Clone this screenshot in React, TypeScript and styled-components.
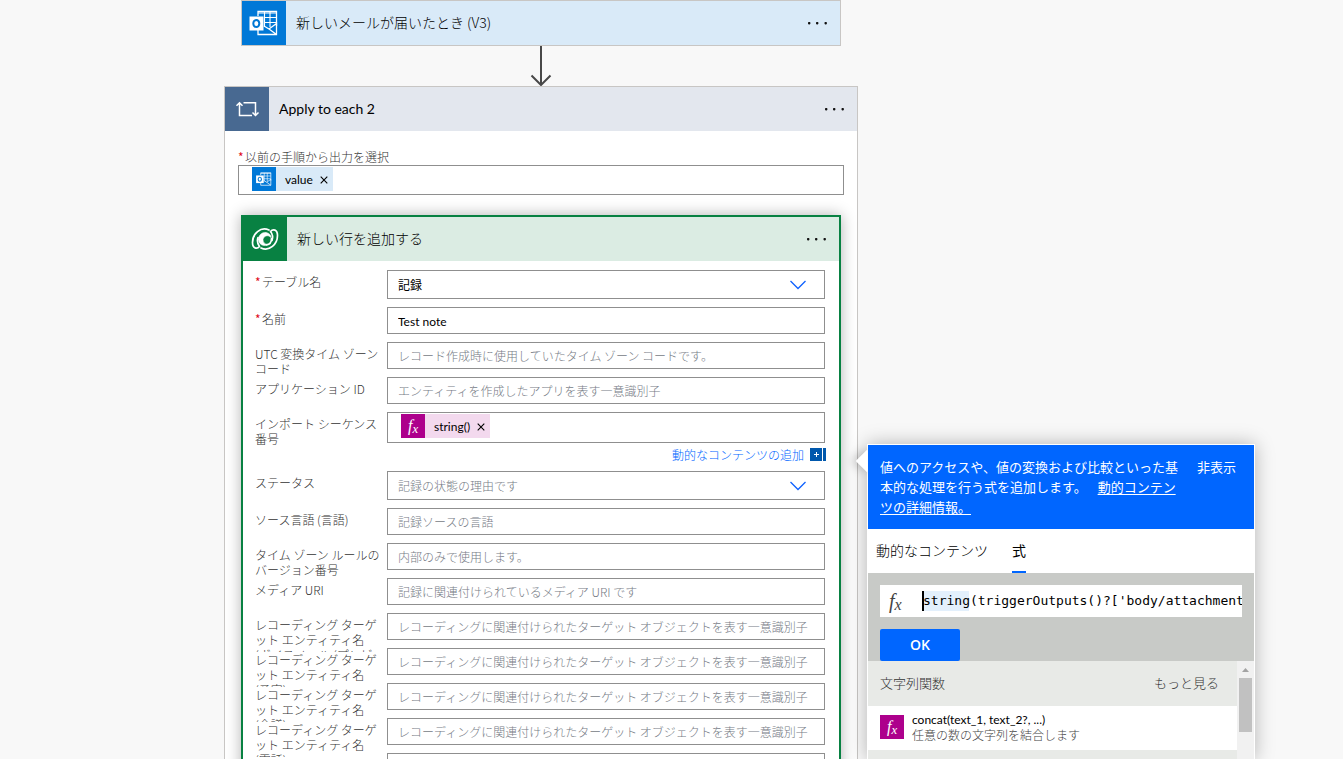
import React, { useState } from "react";
import styled, { createGlobalStyle } from "styled-components";

const GlobalStyle = createGlobalStyle`
  *, *::before, *::after { box-sizing: border-box; }
  body {
    margin: 0;
    background: #f8f8f8;
    color: #000;
    font: 300 12px/15px "Noto Sans CJK JP", sans-serif;
  }
  button, input, select { font: inherit; color: inherit; margin: 0; padding: 0; border: 0; background: none; border-radius: 0; }
  button { cursor: pointer; }
`;

const latinFont = 'Lato, "Noto Sans CJK JP", sans-serif';

const Page = styled.main`
  height: 100vh;
  overflow: hidden;
  padding-left: 224px;
`;

const Flow = styled.div`
  display: flex;
  flex-direction: column;
  width: 100%;
  max-width: 634px;
`;

const TriggerCard = styled.section`
  margin: 0 17px;
  border: 1px solid #c8c6c4;
`;

const Connector = styled.svg`
  display: block;
  align-self: center;
  width: 22px;
  height: 40px;
`;

const LoopCard = styled.section`
  background: #fff;
  border: 1px solid #c8c6c4;
`;

const LoopBody = styled.div`
  padding: 18px 13px 24px;
`;

const ActionCard = styled.section`
  margin: 20px 3px 0;
  background: #fff;
  border: 2px solid #088142;
  box-shadow: 0 0 14px rgba(0, 0, 0, 0.3);
`;

const Header = styled.header<{ $bg: string }>`
  display: flex;
  align-items: center;
  height: 44px;
  background: ${(p) => p.$bg};
`;

const IconTile = styled.span<{ $bg: string; $size: number }>`
  display: flex;
  align-items: center;
  justify-content: center;
  flex: none;
  width: ${(p) => p.$size}px;
  height: ${(p) => p.$size}px;
  background: ${(p) => p.$bg};
  svg { display: block; width: 100%; height: 100%; }
`;

const Title = styled.h2<{ $latin?: boolean }>`
  flex: 1;
  margin: 0 0 0 10px;
  font-size: 14px;
  line-height: 20px;
  ${(p) => (p.$latin ? `font-family: ${latinFont}; font-weight: 400;` : "font-weight: 300; padding-bottom: 2px;")}
`;

const MoreButton = styled.button`
  display: flex;
  align-items: center;
  justify-content: center;
  width: 44px;
  height: 44px;
`;

const FieldLabel = styled.label`
  display: block;
  color: #333;
  white-space: pre-line;
`;

const SourceLabel = styled(FieldLabel)`
  margin-bottom: 1px;
`;

const Star = styled.span`
  display: inline-block;
  width: 7px;
  color: #e00b1c;
  font-weight: 400;
`;

const Rows = styled.div`
  display: flex;
  flex-direction: column;
  gap: 8px;
  padding: 9px 14px 16px 12px;
`;

const Row = styled.div`
  display: grid;
  grid-template-columns: 128px minmax(0, 1fr);
  column-gap: 4px;
  align-items: start;
`;

const RowLabel = styled(FieldLabel)`
  height: 35px;
  margin: 4px 0 -16px;
  overflow: hidden;
`;

const TextInput = styled.input`
  display: block;
  width: 100%;
  height: 27px;
  padding: 2px 10px 0;
  border: 1px solid #8f8f8f;
  background: #fff;
  font-family: ${latinFont};
  font-weight: 400;
  &::placeholder { color: #767b85; opacity: 1; font-family: "Noto Sans CJK JP", sans-serif; font-weight: 300; }
`;

const SelectBox = styled.div`
  display: grid;
  align-items: center;
  > * { grid-area: 1 / 1; }
  > svg { justify-self: end; margin-right: 18px; pointer-events: none; }
`;

const Select = styled.select<{ $empty: boolean }>`
  appearance: none;
  width: 100%;
  height: 29px;
  padding: 0 10px;
  border: 1px solid #8f8f8f;
  background: #fff;
  color: ${(p) => (p.$empty ? "#767b85" : "#000")};
  font-weight: ${(p) => (p.$empty ? 300 : 400)};
`;

const TokenField = styled.div<{ $height: number }>`
  display: flex;
  align-items: flex-start;
  height: ${(p) => p.$height}px;
  padding: 1px 13px;
  border: 1px solid #8f8f8f;
  background: #fff;
  input { flex: 1; min-width: 0; height: 24px; outline: 0; }
`;

const TokenChip = styled.span<{ $bg: string }>`
  display: flex;
  align-items: center;
  height: 24px;
  background: ${(p) => p.$bg};
  font-family: ${latinFont};
  font-weight: 400;
`;

const TokenText = styled.span`
  padding: 0 7px 0 9px;
`;

const RemoveButton = styled.button`
  display: flex;
  padding: 2px 5px 0 0;
`;

const FieldColumn = styled.div`
  position: relative;
  min-width: 0;
`;

const DynamicRow = styled.div`
  display: flex;
  justify-content: flex-end;
  height: 20px;
  margin-right: -1px;
`;

const DynamicLink = styled.button`
  display: flex;
  align-items: center;
  gap: 6px;
  padding-top: 2px;
  color: #0066ff;
`;

const FxGlyph = styled.span<{ $size: number; $color: string }>`
  font: italic 400 ${(p) => p.$size}px/24px "Liberation Serif", serif;
  color: ${(p) => p.$color};
  sub { font-size: 80%; vertical-align: -2px; line-height: 0; }
`;

const Popover = styled.aside`
  position: absolute;
  z-index: 2;
  top: 32px;
  left: calc(100% + 42px);
  width: 388px;
  border: 1px solid #fff;
  background: #fff;
  box-shadow: 0 0 18px rgba(0, 0, 0, 0.28);
  &::before {
    content: "";
    position: absolute;
    z-index: -1;
    top: 8px;
    left: -9px;
    width: 16px;
    height: 16px;
    background: #fff;
    transform: rotate(45deg);
    box-shadow: -3px 3px 10px rgba(0, 0, 0, 0.2);
  }
`;

const Intro = styled.div`
  display: flex;
  align-items: flex-start;
  gap: 17px;
  padding: 12px 18px 12px 12px;
  background: #0066ff;
  color: #fff;
  font-size: 13px;
  line-height: 20px;
  font-weight: 400;
  p { flex: 1; margin: 0; line-break: anywhere; }
  a { margin-left: 8px; color: #fff; text-underline-offset: 2px; }
  button { flex: none; }
`;

const Tabs = styled.div`
  display: flex;
  gap: 24px;
  height: 44px;
  padding-left: 8px;
  background: #fff;
`;

const Tab = styled.button<{ $active?: boolean }>`
  font-size: 14px;
  line-height: 20px;
  font-weight: ${(p) => (p.$active ? 400 : 300)};
  border-bottom: 2px solid ${(p) => (p.$active ? "#0066ff" : "transparent")};
`;

const Editor = styled.div`
  padding: 12px 12px 0;
  background: #c8cac7;
`;

const ExpressionBox = styled.div`
  display: flex;
  align-items: center;
  height: 32px;
  margin-bottom: 12px;
  background: #fff;
`;

const ExpressionIcon = styled.span`
  flex: none;
  width: 42px;
  padding-left: 9px;
`;

const ExpressionInput = styled.input`
  flex: 1;
  min-width: 0;
  height: 20px;
  padding-left: 1px;
  font: 400 13px/20px "DejaVu Sans Mono", monospace;
  background:
    linear-gradient(#000, #000) 0 0 / 2px 20px no-repeat,
    linear-gradient(#e3f0fc, #e3f0fc) 0 0 / 47px 20px no-repeat;
`;

const OkButton = styled.button`
  display: block;
  width: 80px;
  height: 32px;
  border-radius: 2px;
  background: #0066ff;
  color: #fff;
  font: 600 14px/20px "Open Sans", sans-serif;
`;

const ListArea = styled.div`
  display: flex;
  height: 98px;
  overflow: hidden;
  background: #e8eae7;
`;

const List = styled.div`
  flex: 1;
`;

const ListHeader = styled.div`
  display: flex;
  align-items: center;
  justify-content: space-between;
  height: 45px;
  padding: 0 18px 2px 12px;
  font-size: 13px;
  color: #333;
`;

const FunctionItem = styled.button`
  display: flex;
  align-items: center;
  gap: 8px;
  width: 100%;
  height: 44px;
  padding: 0 0 2px 12px;
  background: #fff;
  text-align: left;
`;

const FunctionName = styled.span`
  display: block;
  font-family: ${latinFont};
  font-weight: 400;
`;

const FunctionNote = styled.span`
  display: block;
  color: #444;
`;

const ScrollTrack = styled.div`
  display: flex;
  flex-direction: column;
  align-items: center;
  flex: none;
  width: 17px;
  background: #f1f1f1;
  svg { display: block; }
`;

const ScrollThumb = styled.div`
  width: 13px;
  height: 54px;
  background: #c1c1c1;
`;

const OutlookIcon = () => (
  <svg viewBox="0 0 44 44" fill="none" stroke="#fff" aria-hidden="true">
    <path d="M16 15V10.500H34.500V25" strokeWidth="1.300" />
    <path d="M16 12H34.500M22 16.500H34.500M22 21.500H34.500M22.500 11V26M28 11V26" strokeWidth="1.100" />
    <path d="M16 29V33.500H34.500V22.500L27 28L22 25M27 28L34.500 33.500" strokeWidth="1.300" />
    <rect x="7.500" y="15.500" width="14" height="14" fill="#fff" stroke="none" />
    <ellipse cx="14.300" cy="22.500" rx="3" ry="3.600" stroke="#0078d4" strokeWidth="2" />
  </svg>
);

const LoopIcon = () => (
  <svg viewBox="0 0 44 44" fill="none" stroke="#fff" strokeWidth="1.500" aria-hidden="true">
    <path d="M14.500 16V28.500H27M11.500 18.800L14.500 15.800L17.500 18.800" />
    <path d="M18.500 15.700H30.500V28M27.500 25.500L30.500 28.500L33.500 25.500" />
  </svg>
);

const DataverseIcon = () => (
  <svg viewBox="0 0 44 44" fill="none" stroke="#fff" strokeWidth="1.700" strokeLinejoin="round" strokeLinecap="round" aria-hidden="true">
    <path d="M26 13C17.500 9 9.500 17 9.500 25.500C9.500 31.500 14 32.500 16.500 29.500C14.500 27 14 23.500 15 20.500" />
    <path d="M18 31C26.500 35 34.500 27 34.500 18.500C34.500 12.500 30 11.500 27.500 14.500C29.500 17 30 20.500 29 23.500" />
    <path d="M15.500 22.500C15.500 18 19 15 23 15.500C26 16 28 18 28 20.500C25.500 17.500 20.500 18.500 20 22.500C19.800 25.500 22 27.500 25 27.500C20.500 30 15.500 27.500 15.500 22.500Z" fill="#fff" strokeWidth="0.600" />
    <path d="M28.500 21.500C28.500 25 26.500 27.500 23.500 27.800" />
  </svg>
);

const Dots = () => (
  <svg width="22" height="4" viewBox="0 0 22 4" fill="#111" aria-hidden="true">
    <rect x="1" y="1" width="2.400" height="2.400" rx="0.800" />
    <rect x="9" y="1" width="2.400" height="2.400" rx="0.800" />
    <rect x="17.500" y="1" width="2.400" height="2.400" rx="0.800" />
  </svg>
);

const Chevron = () => (
  <svg width="18" height="12" viewBox="0 0 18 12" fill="none" stroke="#0f62fe" strokeWidth="1.300" aria-hidden="true">
    <path d="M1.500 2L9 9.500L16.500 2" />
  </svg>
);

const Cross = () => (
  <svg width="8" height="8" viewBox="0 0 8 8" stroke="#000" strokeWidth="1.100" aria-hidden="true">
    <path d="M0.700 0.700L7.300 7.300M7.300 0.700L0.700 7.300" />
  </svg>
);

const AddIcon = () => (
  <svg width="16" height="13" viewBox="0 0 16 13" aria-hidden="true">
    <path d="M0 0H12V13H0ZM13 0H16V13H13Z" fill="#0058ad" />
    <path d="M4 6.500H9M6.500 4V9" stroke="#fff" strokeWidth="1" />
  </svg>
);

const Fx = ({ size = 16, color = "#fff" }: { size?: number; color?: string }) => (
  <FxGlyph $size={size} $color={color}>
    f<sub>x</sub>
  </FxGlyph>
);

const More = () => (
  <MoreButton aria-label="その他">
    <Dots />
  </MoreButton>
);

const Token = ({ bg, icon, children }: { bg: string; icon: React.ReactNode; children: string }) => (
  <TokenChip $bg={bg}>
    {icon}
    <TokenText>{children}</TokenText>
    <RemoveButton aria-label="削除">
      <Cross />
    </RemoveButton>
  </TokenChip>
);

const TextRow = (p: { id: string; label: string; required?: boolean; placeholder?: string; value?: string }) => (
  <Row>
    <RowLabel htmlFor={p.id}>
      {p.required && <Star>*</Star>}
      {p.label}
    </RowLabel>
    <TextInput id={p.id} placeholder={p.placeholder} defaultValue={p.value} />
  </Row>
);

const SelectRow = (p: { id: string; label: string; required?: boolean; text: string; empty?: boolean }) => (
  <Row>
    <RowLabel htmlFor={p.id}>
      {p.required && <Star>*</Star>}
      {p.label}
    </RowLabel>
    <SelectBox>
      <Select id={p.id} $empty={!!p.empty}>
        <option>{p.text}</option>
      </Select>
      <Chevron />
    </SelectBox>
  </Row>
);

const ExpressionPopover = ({ onHide }: { onHide: () => void }) => (
  <Popover>
    <Intro>
      <p>
        値へのアクセスや、値の変換および比較といった基本的な処理を行う式を追加します。 <a href="#details">動的コンテンツの詳細情報。</a>
      </p>
      <button onClick={onHide}>非表示</button>
    </Intro>
    <Tabs role="tablist">
      <Tab role="tab" aria-selected={false}>動的なコンテンツ</Tab>
      <Tab role="tab" aria-selected $active>式</Tab>
    </Tabs>
    <Editor>
      <ExpressionBox>
        <ExpressionIcon>
          <Fx size={20} color="#444" />
        </ExpressionIcon>
        <ExpressionInput aria-label="式" defaultValue="string(triggerOutputs()?['body/attachments" />
      </ExpressionBox>
      <OkButton>OK</OkButton>
    </Editor>
    <ListArea>
      <List>
        <ListHeader>
          <span>文字列関数</span>
          <button>もっと見る</button>
        </ListHeader>
        <FunctionItem>
          <IconTile $bg="#ad008c" $size={24}>
            <Fx />
          </IconTile>
          <span>
            <FunctionName>concat(text_1, text_2?, ...)</FunctionName>
            <FunctionNote>任意の数の文字列を結合します</FunctionNote>
          </span>
        </FunctionItem>
      </List>
      <ScrollTrack>
        <svg width="17" height="17" viewBox="0 0 17 17" aria-hidden="true">
          <path d="M5 11L8.500 7L12 11Z" fill="#a3a3a3" />
        </svg>
        <ScrollThumb />
      </ScrollTrack>
    </ListArea>
  </Popover>
);

const targetPlaceholder = "レコーディングに関連付けられたターゲット オブジェクトを表す一意識別子";
const targets = ["(ボイスメール (プレビ", "(予定)", "(会議)", "(電話)", "(連絡先)"];

export default function App() {
  const [open, setOpen] = useState(true);
  return (
    <Page>
      <GlobalStyle />
      <Flow>
        <TriggerCard>
          <Header $bg="#d9eaf8">
            <IconTile $bg="#0078d7" $size={44}>
              <OutlookIcon />
            </IconTile>
            <Title>新しいメールが届いたとき (V3)</Title>
            <More />
          </Header>
        </TriggerCard>
        <Connector viewBox="0 0 22 40" fill="none" stroke="#484848" strokeWidth="2" aria-hidden="true">
          <path d="M11 0V39M1.500 29.500L11 39L20.500 29.500" />
        </Connector>
        <LoopCard>
          <Header $bg="#e3e7ee">
            <IconTile $bg="#486991" $size={44}>
              <LoopIcon />
            </IconTile>
            <Title $latin>Apply to each 2</Title>
            <More />
          </Header>
          <LoopBody>
            <SourceLabel htmlFor="source">
              <Star>*</Star>以前の手順から出力を選択
            </SourceLabel>
            <TokenField $height={30}>
              <Token
                bg="#d9eaf8"
                icon={
                  <IconTile $bg="#0078d7" $size={24}>
                    <OutlookIcon />
                  </IconTile>
                }
              >
                value
              </Token>
              <input id="source" />
            </TokenField>
            <ActionCard>
              <Header $bg="#dbece3">
                <IconTile $bg="#088142" $size={44}>
                  <DataverseIcon />
                </IconTile>
                <Title>新しい行を追加する</Title>
                <More />
              </Header>
              <Rows>
                <SelectRow id="table" label="テーブル名" required text="記録" />
                <TextRow id="name" label="名前" required value="Test note" />
                <TextRow id="utc" label="UTC 変換タイム ゾーン コード" placeholder="レコード作成時に使用していたタイム ゾーン コードです。" />
                <TextRow id="app" label="アプリケーション ID" placeholder="エンティティを作成したアプリを表す一意識別子" />
                <Row>
                  <RowLabel htmlFor="sequence">インポート シーケンス番号</RowLabel>
                  <FieldColumn>
                    <TokenField $height={31}>
                      <Token
                        bg="#f3d9ee"
                        icon={
                          <IconTile $bg="#ad008c" $size={24}>
                            <Fx />
                          </IconTile>
                        }
                      >
                        string()
                      </Token>
                      <input id="sequence" />
                    </TokenField>
                    <DynamicRow>
                      <DynamicLink onClick={() => setOpen(true)}>
                        動的なコンテンツの追加
                        <AddIcon />
                      </DynamicLink>
                    </DynamicRow>
                    {open && <ExpressionPopover onHide={() => setOpen(false)} />}
                  </FieldColumn>
                </Row>
                <SelectRow id="status" label="ステータス" text="記録の状態の理由です" empty />
                <TextRow id="language" label="ソース言語 (言語)" placeholder="記録ソースの言語" />
                <TextRow id="rule" label="タイム ゾーン ルールのバージョン番号" placeholder="内部のみで使用します。" />
                <TextRow id="uri" label="メディア URI" placeholder="記録に関連付けられているメディア URI です" />
                {targets.map((t, i) => (
                  <TextRow key={t} id={`target-${i}`} label={`レコーディング ターゲット エンティティ名\n${t}`} placeholder={targetPlaceholder} />
                ))}
              </Rows>
            </ActionCard>
          </LoopBody>
        </LoopCard>
      </Flow>
    </Page>
  );
}
